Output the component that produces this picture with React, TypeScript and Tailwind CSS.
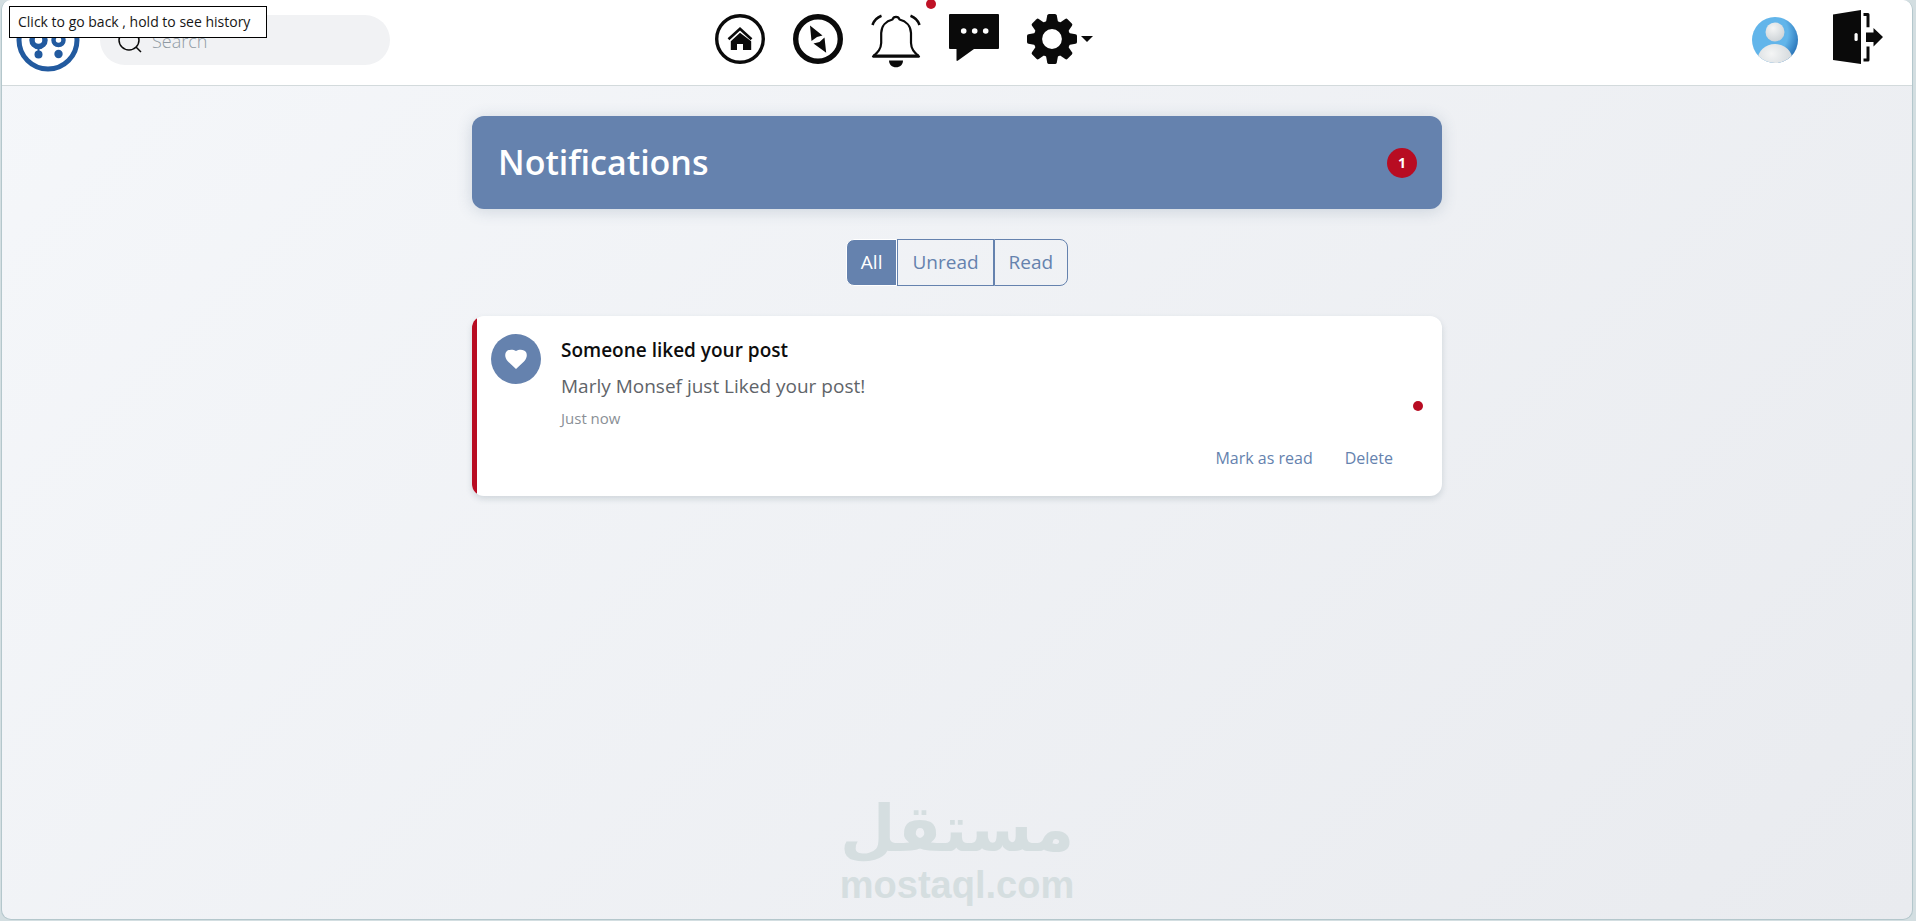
import { useState } from "react";

const filters = ["All", "Unread", "Read"] as const;

function BrandLogo() {
  return (
    <svg viewBox="0 0 64 64" className="size-16" role="img" aria-label="Brand">
      <circle cx="32" cy="32" r="29" fill="#fff" stroke="#225a9f" strokeWidth="5" />
      <g stroke="#225a9f" fill="none">
        <circle cx="22.500" cy="32" r="6.500" strokeWidth="5.500" />
        <circle cx="42.500" cy="32" r="5" strokeWidth="4.500" />
        <path d="M22.500 38v8" strokeWidth="2" />
      </g>
      <circle cx="22.500" cy="46.500" r="4" fill="#225a9f" />
      <circle cx="42.500" cy="46" r="4.200" fill="#225a9f" />
    </svg>
  );
}

function HomeIcon() {
  return (
    <svg viewBox="0 0 50 50" className="size-[50px]" fill="#0a0a0a" aria-hidden="true">
      <circle cx="25" cy="25" r="23.300" fill="none" stroke="#0a0a0a" strokeWidth="3.400" />
      <path d="M13.500 25.300 25 14.700l11.500 10.600" fill="none" stroke="#0a0a0a" strokeWidth="2.600" />
      <path d="M25 18.800 15.800 27.300V36h6.200v-6h6v6h8.200v-8.700z" />
      <path d="M22 30h6v6.500h-6z" fill="#fff" />
    </svg>
  );
}

function CompassIcon() {
  return (
    <svg viewBox="0 0 50 50" className="size-[50px]" fill="#0a0a0a" aria-hidden="true">
      <circle cx="25" cy="25" r="22.300" fill="none" stroke="#0a0a0a" strokeWidth="5.400" />
      <path d="M17 11.500 29.500 21.500 24 23 18.500 27z" />
      <path d="M20.500 29.500 26.500 28 31.500 23.500 33.200 38.700z" />
    </svg>
  );
}

function BellIcon() {
  return (
    <svg viewBox="0 0 50 54" className="h-[54px] w-[50px]" fill="none" stroke="#0a0a0a" strokeWidth="2.200" aria-hidden="true">
      <path d="M2 42.500C7 38 10 35 10.200 29V19C10.500 12 15 7 21.500 5.500 22.500 2 27.500 2 28.500 5.500 35 7 39.700 12 40 19v10c.2 6 3 9 8 13.500z" strokeLinejoin="round" />
      <path d="M2 42h46" strokeWidth="2.800" />
      <path d="M1.500 11C3 6.500 6 3.500 10.500 1.800M48.500 11C47 6.500 44 3.500 39.500 1.800" strokeWidth="2.600" />
      <path d="M18 46.500h14c0 4-3 6.800-7 6.800s-7-2.800-7-6.800z" fill="#0a0a0a" stroke="none" />
    </svg>
  );
}

function ChatIcon() {
  return (
    <svg viewBox="0 0 50 48" className="h-[48px] w-[50px]" aria-hidden="true">
      <path d="M1 0h48q1 0 1 1v33q0 1-1 1H25L9 46.500q-1.500 1-1.500-.5V35H1q-1 0-1-1V1q0-1 1-1z" fill="#0a0a0a" />
      <g fill="#fff">
        <circle cx="14.700" cy="17" r="2.800" />
        <circle cx="25.700" cy="17" r="2.800" />
        <circle cx="36.700" cy="17" r="2.800" />
      </g>
    </svg>
  );
}

function GearIcon() {
  return (
    <svg viewBox="-25 -25 50 50" className="size-[50px]" fill="#0a0a0a" aria-hidden="true">
      {[0, 45, 90, 135, 180, 225, 270, 315].map((angle) => (
        <path key={angle} d="M-6.500-14-4.800-23.500Q-4.500-25-3-25h6Q4.500-25 4.800-23.500L6.500-14z" transform={`rotate(${angle})`} />
      ))}
      <circle r="14.200" fill="none" stroke="#0a0a0a" strokeWidth="8.600" />
    </svg>
  );
}

function Avatar() {
  return (
    <svg viewBox="0 0 48 48" className="size-12" role="img" aria-label="Profile">
      <defs>
        <radialGradient id="sky" cx="0.3" cy="0.35" r="0.8">
          <stop offset="0.6" stopColor="#62b5ea" />
          <stop offset="1" stopColor="#2069b0" />
        </radialGradient>
        <radialGradient id="person" cx="0.4" cy="0.3" r="0.75">
          <stop offset="0" stopColor="#f4f5f5" />
          <stop offset="1" stopColor="#ccd2d6" />
        </radialGradient>
        <clipPath id="disc">
          <circle cx="24" cy="24" r="23" />
        </clipPath>
      </defs>
      <circle cx="24" cy="24" r="23" fill="url(#sky)" />
      <ellipse cx="24" cy="44" rx="17.500" ry="16" fill="url(#person)" clipPath="url(#disc)" />
      <circle cx="24" cy="16" r="9.500" fill="url(#person)" />
    </svg>
  );
}

function DoorIcon() {
  return (
    <svg viewBox="0 0 50 54" className="h-[54px] w-[50px]" fill="#0a0a0a" aria-hidden="true">
      <path d="M0 4.500 28 0v54L0 50z" />
      <rect x="21.500" y="23" width="3.200" height="8" rx="1.500" fill="#fff" />
      <path d="M30.500 4.500H35v12.700M30.500 50H35V36.500" fill="none" stroke="#0a0a0a" strokeWidth="3" strokeLinejoin="round" />
      <path d="M33 22.500h7.500V18L50 27l-9.500 9.500V32H33z" />
    </svg>
  );
}

function Header() {
  return (
    <header className="flex h-[86px] items-start border-b border-[#d3dadc] bg-white">
      <div className="flex w-[37%] shrink-0 items-center gap-5 pt-2 pl-3.5">
        <a href="#home">
          <BrandLogo />
        </a>
        <label className="flex h-[50px] w-[290px] items-center gap-2.5 rounded-full bg-[#f1f2f4] pt-0.5 pl-[18px]">
          <svg viewBox="0 0 24 24" className="size-6" fill="none" stroke="#0a0a0a" strokeWidth="1.500" aria-hidden="true">
            <circle cx="11" cy="11" r="10" />
            <path d="m18 18 5 5" />
          </svg>
          <span className="sr-only">Search</span>
          <input type="search" placeholder="Search" className="w-52 bg-transparent text-lg font-light outline-none placeholder:text-[#8f9aa3]" />
        </label>
      </div>
      <nav className="flex items-start gap-7 pt-3.5 pl-1.5">
        <a href="#home" aria-label="Home"><HomeIcon /></a>
        <a href="#explore" aria-label="Explore"><CompassIcon /></a>
        <a href="#notifications" aria-label="Notifications" className="relative">
          <BellIcon />
          <span className="absolute -top-[15px] -right-[15px] size-2.5 rounded-full bg-[#bf1226]" />
        </a>
        <a href="#messages" aria-label="Messages"><ChatIcon /></a>
        <button type="button" aria-label="Settings" className="flex items-center gap-1">
          <GearIcon />
          <svg viewBox="0 0 12 6" className="h-1.5 w-3" aria-hidden="true"><path d="M0 0h12L6 6z" fill="#0a0a0a" /></svg>
        </button>
      </nav>
      <div className="ml-auto flex items-start gap-[34px] pt-2.5 pr-[29px]">
        <a href="#profile" className="pt-1.5"><Avatar /></a>
        <button type="button" aria-label="Log out"><DoorIcon /></button>
      </div>
    </header>
  );
}

function FilterGroup() {
  const [active, setActive] = useState<string>("All");
  return (
    <div className="flex justify-center">
      {filters.map((name) => (
        <button
          key={name}
          type="button"
          aria-pressed={active === name}
          onClick={() => setActive(name)}
          className={
            "h-[47px] border px-3.5 text-[19px] first:rounded-l-lg last:rounded-r-lg " +
            (active === name ? "border-white bg-[#6582ae] text-white" : "border-[#6582ae] text-[#6582ae]")
          }
        >
          {name}
        </button>
      ))}
    </div>
  );
}

function NotificationCard() {
  return (
    <article className="flex overflow-hidden rounded-xl bg-white shadow-[0_3px_6px_rgba(60,90,100,0.18)]">
      <div className="w-[5px] shrink-0 bg-[#b80c22]" />
      <div className="flex h-[180px] flex-1 items-start py-[18px] pr-[19px] pl-3.5">
        <span className="flex size-[50px] shrink-0 items-center justify-center rounded-full bg-[#6582ae]">
          <svg viewBox="0 0 22 20" className="h-5 w-[22px]" fill="#fff" aria-hidden="true">
            <path d="M11 20 3 12.500C0 9.500-.3 6 .8 3.500 2.500 0 8 0 11 2c3-2 8.500-2 10.200 1.500C22.300 6 22 9.500 19 12.500z" />
          </svg>
        </span>
        <div className="flex-1 pl-5">
          <h2 className="text-[19px] leading-8 font-semibold text-[#0d0d0d]">Someone liked your post</h2>
          <p className="pt-1 text-[19px] leading-8 text-[#5f6469]">Marly Monsef just Liked your post!</p>
          <time className="block text-[15px] leading-8 text-[#8a8f96]">Just now</time>
          <div className="flex justify-end gap-8 pt-2 pr-5 text-base leading-8 text-[#6582ae]">
            <button type="button">Mark as read</button>
            <button type="button">Delete</button>
          </div>
        </div>
        <span className="size-2.5 shrink-0 self-center rounded-full bg-[#b80c22]" />
      </div>
    </article>
  );
}

export default function App() {
  return (
    <div className="flex min-h-screen bg-[#d3dee1] pr-[3px] pb-px pl-px font-['Open_Sans',sans-serif]">
      <div className="relative flex flex-1 flex-col overflow-hidden rounded-[10px] border border-t-0 border-[#b4c7cc] bg-linear-135 from-[#f5f7fa] to-[#e9ebef]">
        <Header />
        <main className="mx-auto flex w-full max-w-[970px] flex-1 flex-col pt-[30px]">
          <div className="flex h-[93px] items-center justify-between rounded-xl bg-[#6582ae] pr-[25px] pl-[26px] shadow-[0_2px_16px_rgba(60,90,120,0.2)]">
            <h1 className="text-[34px] font-semibold text-white">Notifications</h1>
            <span className="flex size-[30px] items-center justify-center rounded-full bg-[#b80c22] text-sm font-bold text-white">1</span>
          </div>
          <div className="py-[30px]">
            <FilterGroup />
          </div>
          <NotificationCard />
        </main>
        <footer className="flex flex-col items-center pt-8 pb-4 font-bold text-[#d5dee0]">
          <span lang="ar" dir="rtl" className="font-['DejaVu_Sans',sans-serif] text-[64px] leading-[76px]">مستقل</span>
          <span className="font-['Liberation_Sans',sans-serif] text-[38px] leading-9">mostaql.com</span>
        </footer>
        <div role="tooltip" className="absolute top-1.5 left-[7px] flex h-8 items-center border border-black bg-white pr-4 pl-2 text-sm text-[#161616]">
          Click to go back , hold to see history
        </div>
      </div>
    </div>
  );
}
